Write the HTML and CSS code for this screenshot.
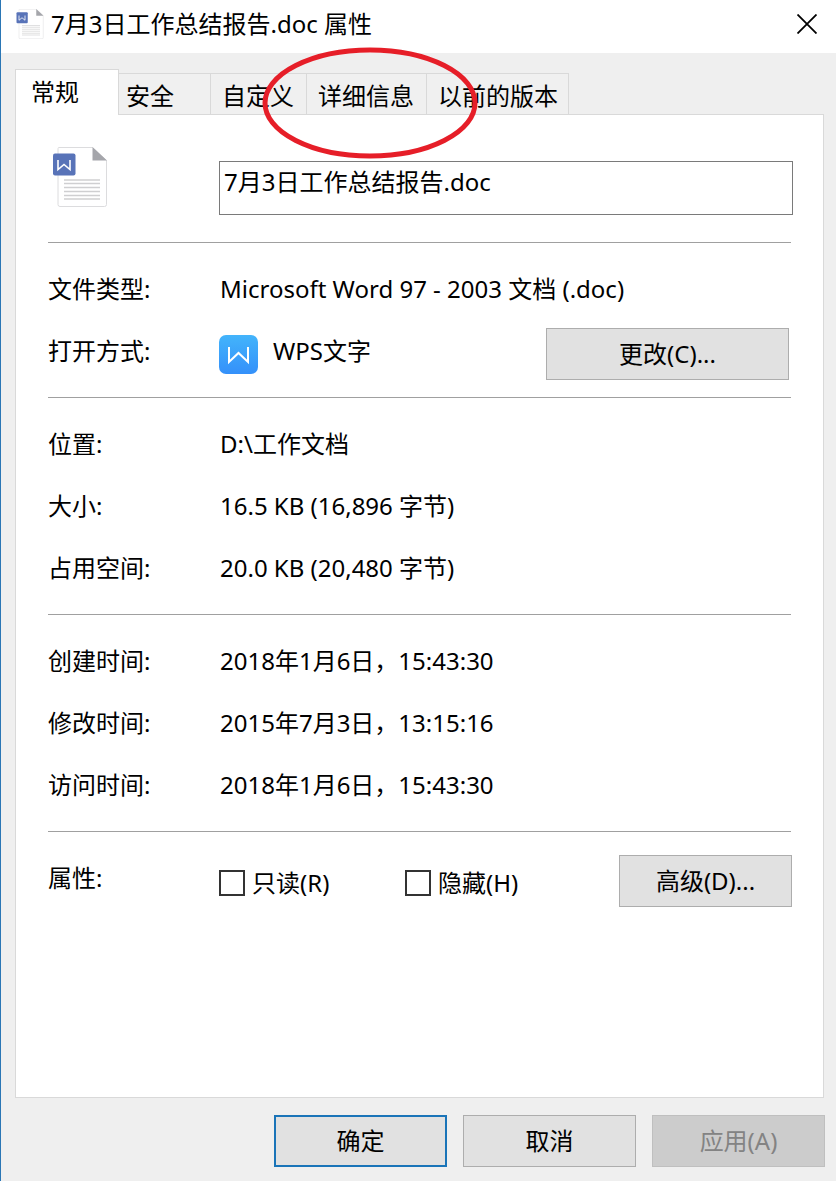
FILE: index.html
```
<!DOCTYPE html>
<html lang="zh-CN">
<head>
<meta charset="utf-8">
<meta name="viewport" content="width=device-width, initial-scale=1">
<title>7月3日工作总结报告.doc 属性</title>
<link rel="stylesheet" href="styles.css">
</head>
<body>
<svg class="defs" width="0" height="0" aria-hidden="true">
  <symbol id="doc" viewBox="0 0 54 60">
    <path d="M6 .5H39.500L53.500 13.500V57.500a2 2 0 0 1-2 2H7a2 2 0 0 1-2-2V1.500a1 1 0 0 1 1-1z" fill="#fff" stroke="#dcdcde"/>
    <path d="M39.500 0L54 13.500H39.500z" fill="#a5a6ab"/>
    <path d="M11 33h36M11 36.500h36M11 40.500h36M11 44.500h36M11 48.500h36M11 52h36" stroke="#cfcfd1" stroke-width="1.300"/>
    <rect x="0" y="6.500" width="22.500" height="22" rx="2" fill="#5873b8"/>
    <path d="M5 13v9.500l6-5 6 5V13" fill="none" stroke="#fff" stroke-width="1.600"/>
  </symbol>
</svg>
<main class="dialog">
  <header class="titlebar">
    <svg class="title-icon" aria-hidden="true"><use href="#doc"/></svg>
    <h1 class="title">7月3日工作总结报告.doc 属性</h1>
    <button class="close" type="button" aria-label="关闭">
      <svg width="20" height="20" viewBox="0 0 20 20" aria-hidden="true"><path d="M.5.5l19 19M19.500.5l-19 19" stroke="#000" stroke-width="1.800"/></svg>
    </button>
  </header>

  <div class="body">
    <div class="tabs" role="tablist">
      <button class="tab tab-active" type="button" role="tab" aria-selected="true">常规</button>
      <button class="tab tab-wide" type="button" role="tab" aria-selected="false">安全</button>
      <button class="tab" type="button" role="tab" aria-selected="false">自定义</button>
      <button class="tab tab-marked" type="button" role="tab" aria-selected="false">详细信息
        <svg class="mark" viewBox="0 0 216 112" aria-hidden="true"><ellipse cx="108" cy="56" rx="105" ry="53" fill="none" stroke="#e61e28" stroke-width="5"/></svg>
      </button>
      <button class="tab tab-last" type="button" role="tab" aria-selected="false">以前的版本</button>
    </div>

    <section class="panel" role="tabpanel" aria-label="常规">
      <div class="file">
        <svg class="file-icon" aria-hidden="true"><use href="#doc"/></svg>
        <input class="file-name" type="text" aria-label="文件名" value="7月3日工作总结报告.doc">
      </div>

      <div class="group">
        <div class="row"><span class="label">文件类型:</span><span>Microsoft Word 97 - 2003 文档 (.doc)</span></div>
        <div class="row">
          <span class="label">打开方式:</span>
          <svg class="app-icon" viewBox="0 0 39 39" aria-hidden="true">
            <defs><linearGradient id="sky" x1="0" y1="0" x2="0" y2="1"><stop offset="0" stop-color="#43b4fb"/><stop offset="1" stop-color="#3490fa"/></linearGradient></defs>
            <rect width="39" height="39" rx="7" fill="url(#sky)"/>
            <path d="M10 12v15l9.500-9 9.500 9V12" fill="none" stroke="#fff" stroke-width="2"/>
          </svg>
          <span>WPS文字</span>
          <button class="btn btn-change" type="button">更改(C)...</button>
        </div>
      </div>

      <div class="group">
        <div class="row"><span class="label">位置:</span><span>D:\工作文档</span></div>
        <div class="row"><span class="label">大小:</span><span>16.5 KB (16,896 字节)</span></div>
        <div class="row"><span class="label">占用空间:</span><span>20.0 KB (20,480 字节)</span></div>
      </div>

      <div class="group">
        <div class="row"><span class="label">创建时间:</span><span>2018年1月6日，15:43:30</span></div>
        <div class="row"><span class="label">修改时间:</span><span>2015年7月3日，13:15:16</span></div>
        <div class="row"><span class="label">访问时间:</span><span>2018年1月6日，15:43:30</span></div>
      </div>

      <div class="group">
        <div class="row">
          <span class="label">属性:</span>
          <label class="check"><input class="box" type="checkbox">只读(R)</label>
          <label class="check"><input class="box" type="checkbox">隐藏(H)</label>
          <button class="btn btn-advanced" type="button">高级(D)...</button>
        </div>
      </div>
    </section>
  </div>

  <footer class="actions">
    <button class="btn btn-default" type="button">确定</button>
    <button class="btn" type="button">取消</button>
    <button class="btn" type="button" disabled>应用(A)</button>
  </footer>
</main>
</body>
</html>
```
FILE: styles.css
```
* {
  box-sizing: border-box;
}

body {
  margin: 0;
}

body,
button,
input {
  font-family: "Noto Sans", "Noto Sans CJK SC", sans-serif;
  font-size: 24px;
  line-height: 32px;
  color: #000;
}

.defs {
  position: absolute;
}

.dialog {
  display: flex;
  flex-direction: column;
  min-height: 100vh;
  border-left: 1px solid #2a76b5;
  background: #efefef;
}

.titlebar {
  display: flex;
  align-items: center;
  height: 53px;
  padding: 0 19px 5px 15px;
  background: #fff;
}

.title-icon {
  width: 28px;
  height: 30px;
}

.title {
  flex: 1;
  margin: 0 0 0 7px;
  font-size: 24px;
  font-weight: 400;
}

.close {
  display: flex;
  padding: 0;
  border: 0;
  background: none;
}

.body {
  display: flex;
  flex: 1;
  flex-direction: column;
  padding: 16px 12px 0 14px;
}

.tabs {
  display: flex;
  align-items: flex-end;
}

.tab {
  height: 41px;
  padding: 3px 12px 0 11px;
  border: 1px solid #d9d9d9;
  border-width: 1px 1px 0 0;
  background: #f0f0f0;
  text-align: left;
  white-space: nowrap;
}

.tab-wide {
  width: 92px;
  padding-left: 7px;
}

.tab-last {
  padding-right: 10px;
}

.tab-active {
  z-index: 1;
  width: 104px;
  height: 46px;
  margin-bottom: -1px;
  padding: 0 15px 2px;
  border-left-width: 1px;
  background: #fff;
}

.tab-marked {
  position: relative;
}

.mark {
  position: absolute;
  top: -27px;
  left: -45px;
  z-index: 2;
  width: 216px;
  height: 112px;
  pointer-events: none;
}

.panel {
  flex: 1;
  padding: 0 32px;
  border: 1px solid #d9d9d9;
  background: #fff;
}

.file {
  display: flex;
  align-items: flex-start;
  gap: 112px;
  margin-right: -2px;
  padding: 32px 0 27px 5px;
}

.file-icon {
  flex: none;
  width: 54px;
  height: 60px;
}

.file-name {
  flex: 1;
  min-width: 0;
  height: 54px;
  margin-top: 14px;
  padding: 0 4px 16px;
  border: 1px solid #7a7a7a;
  border-radius: 0;
  background: #fff;
}

.group {
  padding: 15px 0;
  border-top: 1px solid #a0a0a0;
}

.row {
  display: flex;
  align-items: center;
  height: 62px;
}

.label {
  flex: none;
  width: 172px;
}

.app-icon {
  width: 39px;
  height: 39px;
  margin: 6px 15px 0 -1px;
}

.btn {
  width: 173px;
  height: 52px;
  padding: 0;
  border: 1px solid #adadad;
  background: #e1e1e1;
}

.btn-change {
  width: 243px;
  margin: 6px 2px 0 auto;
}

.btn-advanced {
  margin: 6px -1px 0 auto;
}

.btn-default {
  border: 2px solid #1a74b8;
}

.btn:disabled {
  border-color: #bfbfbf;
  background: #ccc;
  color: #838383;
}

.check {
  display: flex;
  align-items: center;
  gap: 7px;
  width: 187px;
  margin: 10px 0 0 -1px;
}

.box {
  width: 26px;
  height: 26px;
  margin: 0;
  border: 2px solid #333;
  background: #fff;
  appearance: none;
}

.box:checked {
  background: #333;
}

.actions {
  display: flex;
  justify-content: flex-end;
  gap: 16px;
  padding: 17px 11px 14px;
}
```
